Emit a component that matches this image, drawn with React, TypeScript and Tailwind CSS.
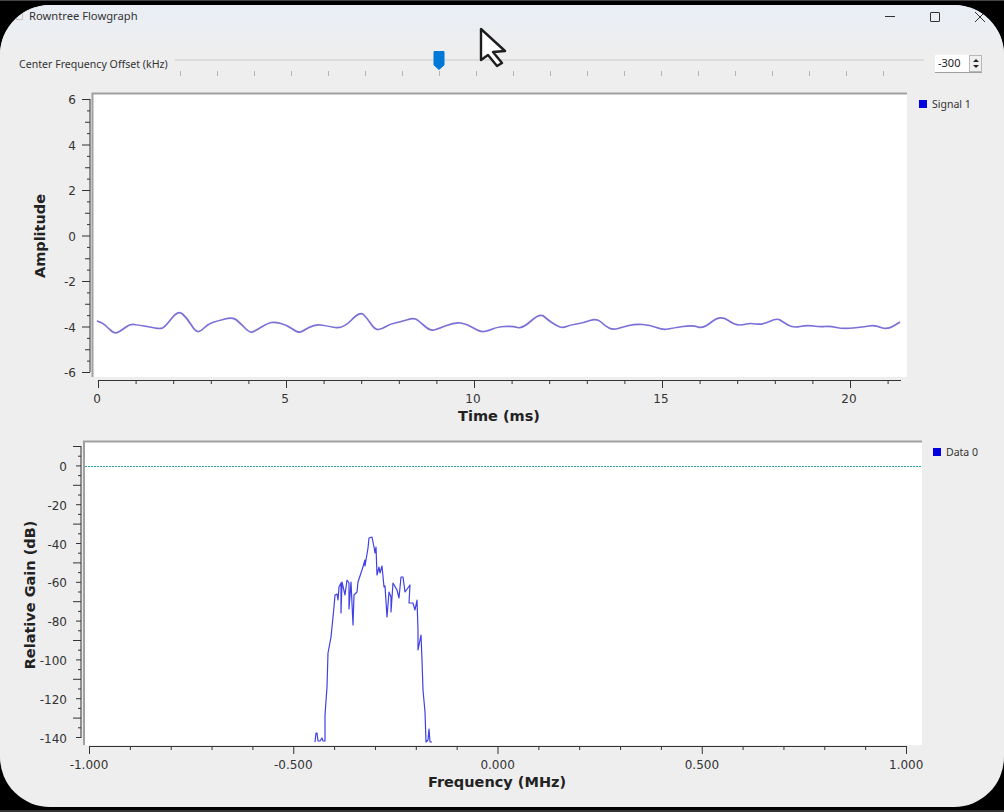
import React from "react";

const SIGNAL_POINTS =
  "97,321 103,323 108,328 115,334 122,330 130,324 138,325 150,327 160,329 165,327 178,310 187,318 195,331 200,332 208,324 217,321 233,317 240,323 250,333 255,331 268,323 275,322 287,325 298,333 303,331 315,324 327,326 343,329 360,311 367,318 375,330 382,329 390,324 400,322 413,318 418,320 430,331 438,329 455,322 467,324 480,332 488,331 497,327 513,326 522,329 540,313 548,320 557,326 563,328 570,325 583,323 597,318 605,326 613,330 623,327 635,324 650,325 663,330 673,328 693,325 703,329 720,315 735,325 743,325 750,323 762,325 777,318 783,322 793,328 807,325 820,327 830,326 843,329 863,327 875,325 887,330 900,322";

const SPECTRUM_POINTS =
  "315,742 316,733 317,733 318,741 320,741 322,738 323,741 325,741 325,715 327,687 328,653 331,637 332,627 334,607 335,595 337,594 338,600 339,587 341,583 341,613 342,582 345,595 347,580 349,583 349,609 351,582 353,625 354,595 357,592 358,582 362,570 365,560 365,566 368,548 369,538 372,537 374,547 375,553 376,547 377,575 379,567 380,573 382,566 384,587 385,586 387,617 389,592 391,597 391,612 393,583 397,590 399,598 401,577 403,577 405,592 410,585 409,603 413,603 415,610 417,600 418,630 418,650 421,635 422,660 423,690 425,712 426,742 428,740 429,729 430,742 432,742";

const SLIDER_TICKS = Array.from({ length: 20 }, (_, i) => 180 + i * 37);

// rounds the measured trace off through the midpoints of its segments
function smoothPath(raw: string) {
  const pts = raw.split(" ").map((p) => p.split(",").map(Number));
  let d = `M${pts[0][0]} ${pts[0][1]}`;
  for (let i = 1; i < pts.length - 1; i++) {
    const mx = (pts[i][0] + pts[i + 1][0]) / 2;
    const my = (pts[i][1] + pts[i + 1][1]) / 2;
    d += `Q${pts[i][0]} ${pts[i][1]} ${mx} ${my}`;
  }
  const last = pts[pts.length - 1];
  return `${d}L${last[0]} ${last[1]}`;
}

function Ticks({
  axis,
  from,
  step,
  count,
  at,
  every,
}: {
  axis: "x" | "y";
  from: number;
  step: number;
  count: number;
  at: number;
  every: number;
}) {
  return (
    <>
      {Array.from({ length: count }, (_, i) => {
        const p = from + i * step;
        const major = i % every === 0;
        const mid = every === 4 && i % every === 2;
        const len = major ? 8 : mid ? 5 : every === 5 ? 4 : 3;
        return axis === "x" ? (
          <line key={i} x1={p} x2={p} y1={at} y2={at + len} stroke="#333" />
        ) : (
          <line key={i} x1={at - len} x2={at} y1={p} y2={p} stroke="#333" />
        );
      })}
    </>
  );
}

function TimePlot() {
  const yLabels = ["6", "4", "2", "0", "-2", "-4", "-6"];
  const xLabels = ["0", "5", "10", "15", "20"];
  return (
    <svg width="914" height="345" viewBox="0 85 914 345" className="shrink-0">
      <rect x="92" y="93" width="815" height="284" fill="#fff" />
      <path d="M92.5 377V93.5H907" fill="none" stroke="#a0a0a0" strokeWidth="2" />
      <line x1="90" x2="90" y1="99" y2="372" stroke="#333" />
      <Ticks axis="y" from={99.5} step={11.375} count={25} at={90} every={4} />
      {yLabels.map((t, i) => (
        <text key={t} x="76" y={104 + i * 45.5} textAnchor="end" fontSize="12" fill="#333">
          {t}
        </text>
      ))}
      <line x1="98" x2="901" y1="380.5" y2="380.5" stroke="#333" />
      <Ticks axis="x" from={98.5} step={37.6} count={22} at={380} every={5} />
      {xLabels.map((t, i) => (
        <text key={t} x={97 + i * 188} y="403" textAnchor="middle" fontSize="12" fill="#333">
          {t}
        </text>
      ))}
      <path d={smoothPath(SIGNAL_POINTS)} fill="none" stroke="#7a70d8" strokeWidth="1.7" strokeLinejoin="round" />
      <text x="499" y="421" textAnchor="middle" fontSize="14.5" fontWeight="700" fill="#222">
        Time (ms)
      </text>
      <text transform="translate(45 236) rotate(-90)" textAnchor="middle" fontSize="14.500" fontWeight="700" fill="#222">
        Amplitude
      </text>
    </svg>
  );
}

function FrequencyPlot() {
  const yLabels = ["0", "-20", "-40", "-60", "-80", "-100", "-120", "-140"];
  const xLabels = ["-1.000", "-0.500", "0.000", "0.500", "1.000"];
  return (
    <svg width="928" height="372" viewBox="0 430 928 372" className="shrink-0">
      <rect x="84" y="441" width="838" height="304" fill="#fff" />
      <path d="M84 745V441.500H922" fill="none" stroke="#a0a0a0" strokeWidth="2" />
      <line x1="81" x2="81" y1="446" y2="738" stroke="#333" />
      <Ticks axis="y" from={446.5} step={9.7} count={31} at={81} every={4} />
      <line x1="89" x2="907" y1="746.500" y2="746.500" stroke="#333" />
      <Ticks axis="x" from={89.5} step={40.85} count={21} at={746} every={5} />
      {yLabels.map((t, i) => (
        <text key={t} x="67" y={471 + i * 38.8} textAnchor="end" fontSize="12" fill="#333">
          {t}
        </text>
      ))}
      {xLabels.map((t, i) => (
        <text key={t} x={89 + i * 204.3} y="769" textAnchor="middle" fontSize="12" fill="#333">
          {t}
        </text>
      ))}
      <line x1="85" x2="921" y1="466.500" y2="466.500" stroke="#22a5a5" strokeDasharray="2 1" />
      <polyline points={SPECTRUM_POINTS} fill="none" stroke="#4040e4" strokeWidth="1.2" strokeLinejoin="round" />
      <text x="497" y="787" textAnchor="middle" fontSize="14.500" fontWeight="700" fill="#222">
        Frequency (MHz)
      </text>
      <text transform="translate(35 595) rotate(-90)" textAnchor="middle" fontSize="14.500" fontWeight="700" fill="#222">
        Relative Gain (dB)
      </text>
    </svg>
  );
}

function Legend({ label }: { label: string }) {
  return (
    <div className="flex items-center gap-[5px] text-[10.5px] leading-none text-[#333]">
      <span className="h-2 w-2 bg-[#0000e0]" />
      <span>{label}</span>
    </div>
  );
}

export default function App() {
  return (
    <div className="relative h-[812px] w-[1004px] overflow-hidden bg-black pt-[5px] font-['DejaVu_Sans',sans-serif]">
      <div className="flex h-[802px] flex-col overflow-hidden rounded-[50px] bg-[#eeeeee]">
        <div className="h-[80px] shrink-0 bg-gradient-to-b from-[#e9eef5] to-[#eeeeee] to-60%">
          {/* title bar */}
          <div className="flex h-[22px] items-center pl-[16px] pt-[1px]">
            <span className="h-[7px] w-[7px] border border-[#c4c4c4]" />
            <span className="ml-[6px] font-['Noto_Sans',sans-serif] text-[11.2px] text-[#333]">Rowntree Flowgraph</span>
            <div className="ml-auto flex items-center gap-[35px] pr-[19px]">
              <span className="h-px w-[10px] bg-[#333]" />
              <span className="h-[10px] w-[10px] rounded-[1px] border border-[#333]" />
              <svg width="10" height="10" viewBox="0 0 10 10">
                <path d="M0 0L10 10M10 0L0 10" stroke="#333" fill="none" />
              </svg>
            </div>
          </div>

          {/* offset slider */}
          <div className="mt-[17px] flex h-[38px] items-center pl-[19px]">
            <span className="mt-[4px] w-[156px] font-['Noto_Sans',sans-serif] text-[10.6px] text-[#333]">
              Center Frequency Offset (kHz)
            </span>
            <div className="relative h-[38px] w-[749px]">
              <div className="absolute left-0 right-0 top-[15px] h-[2px] bg-[#dcdcdc]" />
              <svg width="12" height="20" viewBox="0 0 12 20" className="absolute left-[258px] top-[6px]">
                <path d="M1 1.500H11V15L6 19.500L1 15Z" fill="#0078d7" stroke="#0078d7" strokeLinejoin="round" />
              </svg>
              <div className="flex pl-[5px] pt-[27px]">
                {SLIDER_TICKS.map((t) => (
                  <span key={t} className="mr-[36px] h-[5px] w-px shrink-0 bg-[#b4b4b4]" />
                ))}
              </div>
            </div>
            <div className="ml-[11px] mt-[2px] flex h-[18px] w-[47px] items-center border-b border-[#a0a0a0] bg-white pl-[3px] text-[11px] text-[#222]">
              <span className="font-['Noto_Sans',sans-serif]">-300</span>
              <span className="ml-auto flex h-[17px] w-[13px] flex-col items-center justify-center gap-[3px] border border-[#b8b8b8] bg-[#f0f0f0]">
                <span className="h-0 w-0 border-x-[3px] border-b-[3px] border-x-transparent border-b-[#222]" />
                <span className="h-0 w-0 border-x-[3px] border-t-[3px] border-x-transparent border-t-[#222]" />
              </span>
            </div>
          </div>
        </div>

        {/* time sink */}
        <div className="flex h-[345px] shrink-0">
          <TimePlot />
          <div className="pl-[5px] pt-[14px] font-['Noto_Sans',sans-serif]">
            <Legend label="Signal 1" />
          </div>
        </div>

        {/* frequency sink */}
        <div className="flex flex-1">
          <FrequencyPlot />
          <div className="pl-[5px] pt-[17px] font-['Noto_Sans',sans-serif]">
            <Legend label="Data 0" />
          </div>
        </div>
      </div>

      {/* mouse cursor */}
      <svg width="30" height="42" viewBox="0 0 30 42" className="absolute left-[479px] top-[27px]">
        <path
          d="M2 2V33L9 28L18 39L23 36L14 25L26 24Z"
          fill="#fff"
          stroke="#1e1e1e"
          strokeWidth="2.400"
          strokeLinejoin="round"
        />
      </svg>
      <div className="absolute inset-x-0 top-0 h-px bg-[#444]" />
      <div className="absolute inset-x-0 bottom-0 h-[2px] bg-[#333]" />
    </div>
  );
}
